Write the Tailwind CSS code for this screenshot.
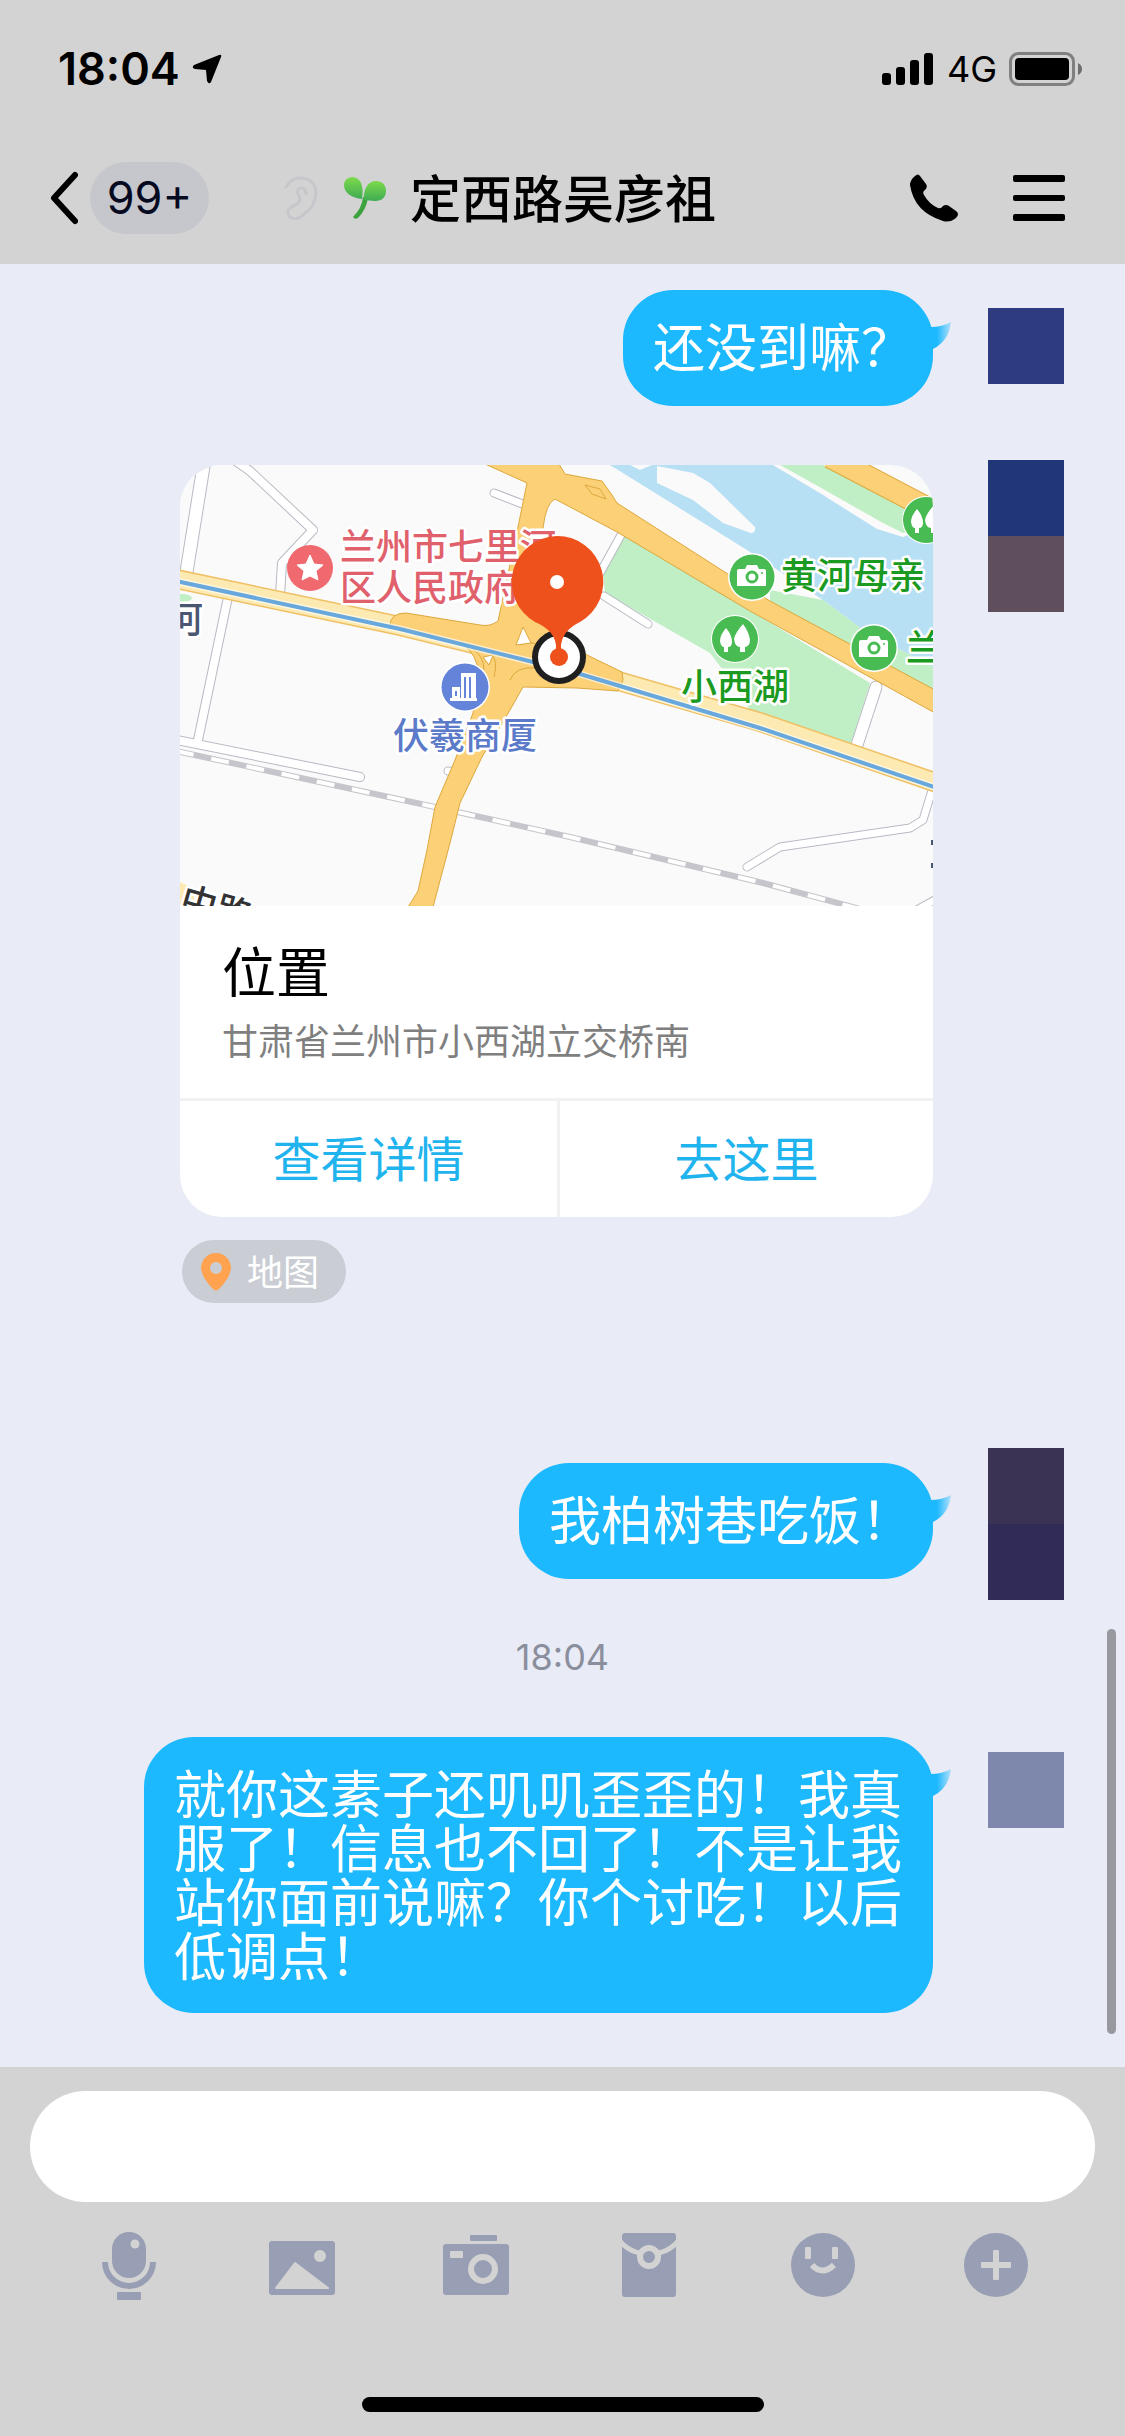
<!DOCTYPE html>
<html lang="zh-CN">
<head>
    <meta charset="UTF-8">
    <meta name="viewport" content="width=device-width, initial-scale=1.0">
    <title>定西路吴彦祖</title>
    <script src="https://cdn.jsdelivr.net/npm/@tailwindcss/browser@4"></script>
</head>
<body class="min-h-screen flex flex-col bg-[#e9ecf6] font-['Inter','Noto_Sans_CJK_SC',sans-serif]">

    <!-- 顶部 -->
    <header class="bg-[#d3d3d3] text-black">
        <!-- 状态栏 -->
        <div class="h-[138px] flex items-center pl-[58px] pr-[42px]">
            <span class="text-[45px] font-semibold">18:04</span>
            <svg class="ml-3 w-[30px] h-[30px]" viewBox="0 0 30 30"><path d="M27 1 L2 11 Q-1 14 3 15 L14 16 L15 27 Q17 31 19 28 L29 3 Q30 0 27 1Z"/></svg>
            <svg class="ml-auto w-[51px] h-[32px]" viewBox="0 0 51 32">
                <rect x="0" y="20" width="9" height="12" rx="3"/>
                <rect x="14" y="14" width="9" height="18" rx="3"/>
                <rect x="28" y="7" width="9" height="25" rx="3"/>
                <rect x="42" y="0" width="9" height="32" rx="3"/>
            </svg>
            <span class="ml-[14px] text-[36px]">4G</span>
            <svg class="ml-3 w-[74px] h-[34px]" viewBox="0 0 74 34">
                <rect x="1.5" y="1.5" width="63" height="31" rx="8" fill="none" stroke="#808080" stroke-width="3"/>
                <rect x="6" y="6" width="54" height="22" rx="4"/>
                <path d="M69 11 Q73 13 73 17 Q73 21 69 23Z" fill="#6e6e6e"/>
            </svg>
        </div>
        <!-- 导航栏 -->
        <nav class="h-[126px] pb-[6px] flex items-center pl-[50px] pr-[60px]">
            <button type="button" class="flex items-center gap-3" aria-label="返回">
                <svg class="w-[28px] h-[54px]" viewBox="0 0 28 54"><path d="M25 4 L4 27 L25 50" fill="none" stroke="#000" stroke-width="6" stroke-linecap="round" stroke-linejoin="round"/></svg>
                <span class="w-[119px] h-[72px] rounded-full bg-[#c6c7cc] text-[#050a20] text-[45px] flex items-center justify-center">99+</span>
            </button>
            <svg class="ml-[75px] w-[34px] h-[44px]" viewBox="0 0 34 44" fill="none" stroke="#c6c7ca" stroke-width="3" stroke-linecap="round">
                <path d="M2 11 Q7 2 17 2 Q32 3 32 18 Q30 32 21 37 Q17 42 11 43 Q3 42 4 34 Q8 30 13 28 Q18 25 15 20 Q11 13 17 12 Q22 12 22 18"/>
            </svg>
            <svg class="ml-[26px] w-[44px] h-[42px]" viewBox="0 0 44 42">
                <defs>
                    <linearGradient id="leaf" x1="0" y1="0" x2="0" y2="1">
                        <stop offset="0" stop-color="#7ddb4c"/>
                        <stop offset="1" stop-color="#3fab52"/>
                    </linearGradient>
                </defs>
                <path d="M19 20 L24 21 Q22 33 14 41 Q11 43 9 40 Q18 31 19 20Z" fill="#3ba23d"/>
                <path d="M18 22 C8 21 0 16 0 8 C0 3 4 0 9 0 C17 1 20 9 18 22Z" fill="url(#leaf)"/>
                <path d="M20 23 C19 12 24 4 32 4 C38 4 42 8 42 14 C42 20 38 24 31 24Z" fill="url(#leaf)"/>
            </svg>
            <h1 class="ml-[22px] pt-1 text-[51px] font-medium leading-[72px]">定西路吴彦祖</h1>
            <button type="button" class="ml-auto" aria-label="语音通话">
                <svg class="w-[48px] h-[48px]" viewBox="0 0 48 48"><path d="M5 2 Q8 -1 10 2 L16 10 Q18 13 15 16 Q12 18 14 21 Q19 30 28 34 Q31 35 33 32 Q36 30 39 32 L46 37 Q50 40 46 44 Q40 49 33 47 Q4 38 0 11 Q0 6 5 2Z"/></svg>
            </button>
            <button type="button" class="ml-[55px]" aria-label="菜单">
                <svg class="w-[52px] h-[48px]" viewBox="0 0 52 48">
                    <rect x="0" y="1" width="52" height="7" rx="2"/>
                    <rect x="0" y="21" width="52" height="6" rx="2"/>
                    <rect x="0" y="40" width="52" height="7" rx="2"/>
                </svg>
            </button>
        </nav>
    </header>

    <!-- 聊天记录 -->
    <main class="relative flex-1 pt-[26px] pr-[61px] pb-[54px] pl-[61px]">
        <svg class="absolute w-0 h-0">
            <defs>
                <linearGradient id="tailFill" x1="0" x2="1">
                    <stop offset="0.3" stop-color="#1cb9ff"/>
                    <stop offset="1" stop-color="#b3def8"/>
                </linearGradient>
                <symbol id="tail" viewBox="0 0 20 27"><path d="M0 5 Q11 5 20 0 Q18 19 2 27 L0 27Z" fill="url(#tailFill)"/></symbol>
            </defs>
        </svg>

        <div class="flex justify-end items-start gap-[55px]">
            <div class="relative min-h-[116px] rounded-[50px] bg-[#1cb9ff] pl-[30px] pr-5 pt-8 pb-7 text-white text-[52px] leading-[54px]">
                <p>还没到嘛？</p>
                <svg class="absolute top-8 -right-[18px] w-5 h-[27px]"><use href="#tail"/></svg>
            </div>
            <div class="mt-[18px] w-[76px] h-[76px] bg-[#2f3b80]"></div>
        </div>

        <div class="mt-[54px] flex justify-end items-start gap-[55px]">
            <div class="mt-[5px] w-[753px]">
                <article class="rounded-[42px] overflow-hidden bg-white">
                    <!-- 地图 -->
                    <svg class="block w-full h-[441px] font-['Noto_Sans_CJK_SC',sans-serif] text-[36px] font-medium" viewBox="0 0 753 441" preserveAspectRatio="xMidYMid slice">
                        <defs>
                            <g id="camera">
                                <circle r="24" fill="#fff"/>
                                <circle r="22.5" fill="#48bb52"/>
                                <path d="M-13 -8 H-7 L-5 -12 H5 L7 -8 H12 Q14 -8 14 -6 V9 H-15 V-6 Q-15 -8 -13 -8Z" fill="#fff"/>
                                <circle r="5" fill="#fff" stroke="#48bb52" stroke-width="3"/>
                                <circle cx="10" cy="-4" r="1" fill="#48bb52"/>
                            </g>
                            <g id="trees">
                                <circle r="24" fill="#fff"/>
                                <circle r="23" fill="#48bb52"/>
                                <path d="M-9 -11 Q-15 -4 -15 2 Q-14 8 -11 8 V13 H-7 V8 Q-3 8 -3 3 Q-3 -4 -9 -11Z" fill="#fff"/>
                                <path d="M8 -15 Q0 -6 -1 0 Q0 8 5 8 V13 H10 V8 Q15 7 15 1 Q14 -7 8 -15Z" fill="#fff"/>
                            </g>
                        </defs>
                        <rect width="753" height="441" fill="#fbfafa"/>

                        <!-- 黄河与绿地 -->
                        <path d="M430 0 L567 85 L643 135 L683 165 L753 202 V0Z" fill="#b8e0f4"/>
                        <path d="M450 0 H472 L460 5Z M477 1 L513 8 L530 18 L575 62 Q576 68 571 68 L543 58 L513 35 L477 18Z" fill="#fbfafa"/>
                        <path d="M593 0 L643 30 L697 64 L723 72 L753 60 V0Z" fill="#fbfafa"/>
                        <path d="M600 0 L643 24 L703 58 L723 68 L753 60 V50 L643 0Z" fill="#c0eec5"/>
                        <path d="M590 125 L643 135 L683 165 L753 202 V232 L590 145Z" fill="#c0eec5"/>
                        <path d="M445 70 L423 108 L425 128 L530 188 L543 205 L570 245 L670 282 L690 218Z" fill="#c0eec5"/>
                        <ellipse cx="2" cy="133" rx="10" ry="4" fill="#c0eec5"/>

                        <!-- 小路 -->
                        <g fill="none" stroke-linecap="round" stroke-linejoin="round">
                            <g stroke="#b8bac4">
                                <path d="M25 -8 L6 110" stroke-width="14"/>
                                <path d="M50 -8 L70 6 L133 65 L102 98 L100 130" stroke-width="10"/>
                                <path d="M48 132 L18 275" stroke-width="10"/>
                                <path d="M-8 274 L180 312" stroke-width="10"/>
                                <path d="M314 28 L345 40 M268 306 L285 308" stroke-width="9"/>
                                <path d="M441 70 L420 108 M424 131 L468 159" stroke-width="9"/>
                                <path d="M696 222 L675 286" stroke-width="13"/>
                                <path d="M753 322 L743 355 L730 363 L600 382 L567 402" stroke-width="9"/>
                                <path d="M735 446 L760 432" stroke-width="9"/>
                            </g>
                            <g stroke="#fff">
                                <path d="M25 -8 L6 110" stroke-width="12"/>
                                <path d="M50 -8 L70 6 L133 65 L102 98 L100 130" stroke-width="8"/>
                                <path d="M48 132 L18 275" stroke-width="8"/>
                                <path d="M-8 274 L180 312" stroke-width="8"/>
                                <path d="M314 28 L345 40 M268 306 L285 308" stroke-width="7"/>
                                <path d="M441 70 L420 108 M424 131 L468 159" stroke-width="7"/>
                                <path d="M696 222 L675 286" stroke-width="11"/>
                                <path d="M753 322 L743 355 L730 363 L600 382 L567 402" stroke-width="7"/>
                                <path d="M735 446 L760 432" stroke-width="7"/>
                            </g>
                        </g>

                        <!-- 铁路 -->
                        <g fill="none">
                            <path d="M-4 286 L255 342 L390 372 L583 418 L680 444" stroke="#c5c5cb" stroke-width="6"/>
                            <path d="M-4 286 L255 342 L390 372 L583 418 L680 444" stroke="#fff" stroke-width="4" stroke-dasharray="18 18"/>
                        </g>

                        <!-- 主干道 -->
                        <g fill="none">
                            <path d="M-4 114 L220 161 L400 205 L580 257 L757 318" stroke="#efc064" stroke-width="20"/>
                            <path d="M-4 114 L220 161 L400 205 L580 257 L757 318" stroke="#fdeab2" stroke-width="17"/>
                            <path d="M650 -8 L757 48" stroke="#dca83c" stroke-width="23"/>
                            <path d="M650 -8 L757 48" stroke="#fbd077" stroke-width="21"/>
                        </g>
                        <path d="M305 -1 L347 18 L338 62 L318 156 Q310 162 300 160 L226 148 Q210 148 210 161 L285 181 Q296 190 298 205 L293 248 L275 295 L255 342 L247 385 L238 426 L228 442 H253 L270 378 L280 338 L302 292 L330 245 L343 222 L397 223 L438 226 L443 215 L442 207 L407 190 L365 158 Q352 140 352 110 L363 63 Q366 38 375 34 L437 67 L570 146 L755 248 V225 L590 136 L437 38 L432 30 L422 16 L385 9 L379 -1Z" fill="#fbd077" stroke="#dca83c" stroke-width="1"/>
                        <path d="M405 20 L420 24 L426 34 L412 29Z M312 190 Q318 196 314 212 M330 215 Q336 201 355 203 M340 180 Q352 174 360 182 M290 182 Q304 190 304 205" fill="none" stroke="#dca83c" stroke-width="1"/>
                        <path d="M343 162 L336 180 L351 178Z M303 192 L313 190 L309 200Z" fill="#fff" stroke="#dca83c" stroke-width="1"/>
                        <path d="M-4 116 L220 164 L353 197 L400 209 L580 263 L757 323" fill="none" stroke="#fff" stroke-width="7" stroke-opacity="0.6"/>
                        <path d="M-4 116 L220 164 L353 197 L400 209 L580 263 L757 323" fill="none" stroke="#68a8dc" stroke-width="4"/>
                        <path d="M-4 415 L14 424 V446 H-4Z" fill="#fdeab2"/>

                        <!-- 地名 -->
                        <g stroke="#fff" stroke-width="5" stroke-linejoin="round" paint-order="stroke">
                            <text x="160" y="95" fill="#e0616c">兰州市七里河</text>
                            <text x="160" y="136" fill="#e0616c">区人民政府</text>
                            <text x="-13" y="168" fill="#4a5672">河</text>
                            <text x="213" y="284" fill="#5b7ac9">伏羲商厦</text>
                            <text x="601" y="124" fill="#1a9a20">黄河母亲</text>
                            <text x="501" y="235" fill="#1a9a20">小西湖</text>
                            <text x="726" y="196" fill="#1a9a20">兰</text>
                            <text x="-2" y="446" fill="#333" transform="rotate(16 0 446)">中路</text>
                        </g>
                        <path d="M751 375 h2 v5 h-2z M751 398 h2 v5 h-2z" fill="#4a5672"/>

                        <!-- 标记 -->
                        <circle cx="130" cy="103" r="23" fill="#f0696f"/>
                        <path d="M130 90 L134 99 L143 100 L136 106 L138 115 L130 111 L122 115 L124 106 L117 100 L126 99Z" fill="#fff" stroke="#fff" stroke-linejoin="round"/>
                        <circle cx="285" cy="222" r="25" fill="#fff"/>
                        <circle cx="285" cy="222" r="23.5" fill="#6484da"/>
                        <path d="M270 233 H297 V236 H270Z M272 222 H280 V234 H272Z M281 208 H296 V234 H281Z" fill="#fff"/>
                        <path d="M285 212 V233 M290 212 V233 M276 226 V231" stroke="#6484da" stroke-width="2"/>
                        <use href="#camera" x="572" y="112"/>
                        <use href="#camera" x="694" y="183"/>
                        <use href="#trees" x="555" y="174"/>
                        <use href="#trees" x="746" y="55"/>

                        <circle cx="379" cy="192" r="24" fill="#fff" stroke="#1f1f1f" stroke-width="6"/>
                        <path d="M377 71 A46 46 0 0 1 400 157 Q383 165 381 180 V190 H376 V180 Q374 165 355 157 A46 46 0 0 1 377 71Z" fill="#ee511c"/>
                        <circle cx="379" cy="192" r="9" fill="#ee511c"/>
                        <circle cx="377" cy="117" r="7" fill="#fff"/>
                    </svg>
                    <div class="h-[192px] pt-[38px] pl-[42px]">
                        <h2 class="text-[54px] leading-[60px] text-black">位置</h2>
                        <p class="mt-4 text-[36px] leading-[44px] text-[#7f7f7f]">甘肃省兰州市小西湖立交桥南</p>
                    </div>
                    <div class="grid grid-cols-[380fr_373fr] border-t-[3px] border-[#f1f1f2] text-[48px] text-[#1fb4ee]">
                        <button type="button" class="h-[116px] pt-[2px] border-r-[3px] border-[#f1f1f2]">查看详情</button>
                        <button type="button" class="h-[116px] pt-[2px]">去这里</button>
                    </div>
                </article>
                <a href="#" class="mt-[23px] ml-[2px] w-[164px] h-[63px] rounded-full bg-[#cacdd4] flex items-center pl-[19px] gap-4 text-[36px] text-white">
                    <svg class="w-[30px] h-[38px]" viewBox="0 0 30 38"><path d="M15 0 A15 15 0 0 1 30 15 Q29 25 18 36 Q15 39 12 36 Q1 25 0 15 A15 15 0 0 1 15 0Z M15 9 A6 6 0 0 0 15 21 A6 6 0 0 0 15 9Z" fill="#ffa351"/></svg>
                    <span class="pt-[2px]">地图</span>
                </a>
            </div>
            <div class="w-[76px]">
                <div class="h-[76px] bg-[#213579]"></div>
                <div class="h-[76px] bg-[#5f4f5c]"></div>
            </div>
        </div>

        <div class="mt-[145px] flex justify-end items-start gap-[55px]">
            <div class="relative mt-[15px] min-h-[116px] rounded-[50px] bg-[#1cb9ff] pl-[30px] pr-5 pt-8 pb-7 text-white text-[52px] leading-[54px]">
                <p>我柏树巷吃饭！</p>
                <svg class="absolute top-8 -right-[18px] w-5 h-[27px]"><use href="#tail"/></svg>
            </div>
            <div class="w-[76px]">
                <div class="h-[76px] bg-[#3a3353]"></div>
                <div class="h-[76px] bg-[#302b57]"></div>
            </div>
        </div>

        <time class="block mt-[35px] text-center text-[36px] leading-[44px] text-[#8b8f9d]">18:04</time>

        <div class="mt-[58px] flex justify-end items-start gap-[55px]">
            <div class="relative w-[789px] rounded-[50px] bg-[#1cb9ff] px-[30px] pt-8 pb-7 text-white text-[52px] leading-[54px]">
                <p>就你这素子还叽叽歪歪的！我真<br>服了！信息也不回了！不是让我<br>站你面前说嘛？你个讨吃！以后<br>低调点！</p>
                <svg class="absolute top-8 -right-[18px] w-5 h-[27px]"><use href="#tail"/></svg>
            </div>
            <div class="mt-[15px] w-[76px] h-[76px] bg-[#7e88ac]"></div>
        </div>

        <!-- 滚动条 -->
        <div class="absolute right-[9px] bottom-[33px] w-[9px] h-[405px] rounded-full bg-[#98999f]"></div>
    </main>

    <!-- 输入区 -->
    <footer class="bg-[#d3d3d3] pt-6 pb-6">
        <div class="px-[30px]">
            <input type="text" aria-label="输入消息" class="block w-full h-[111px] rounded-full bg-white px-12 text-[48px] outline-none">
        </div>
        <div class="mt-[27px] px-[42px] grid grid-cols-6 justify-items-center text-[#989eb4]">
            <button type="button" aria-label="语音">
                <svg class="w-[72px] h-[72px]" viewBox="0 0 72 72" fill="currentColor">
                    <rect x="19" y="3" width="34" height="46" rx="17"/>
                    <circle cx="42" cy="15" r="4.5" fill="#d3d3d3"/>
                    <path d="M12 33 A24 24 0 0 0 60 33" fill="none" stroke="currentColor" stroke-width="6"/>
                    <rect x="24" y="63" width="24" height="8" rx="1"/>
                </svg>
            </button>
            <button type="button" aria-label="图片">
                <svg class="w-[72px] h-[72px]" viewBox="0 0 72 72" fill="currentColor">
                    <rect x="3" y="12" width="66" height="54" rx="3"/>
                    <circle cx="54" cy="27" r="6" fill="#d3d3d3"/>
                    <path d="M29 34 L10 59 H62Z" fill="#d3d3d3" stroke="#d3d3d3" stroke-width="2" stroke-linejoin="round"/>
                </svg>
            </button>
            <button type="button" aria-label="拍照">
                <svg class="w-[72px] h-[72px]" viewBox="0 0 72 72" fill="currentColor">
                    <rect x="30" y="6" width="27" height="6" rx="1"/>
                    <rect x="3" y="15" width="66" height="51" rx="3"/>
                    <rect x="10" y="22" width="13" height="7" rx="1" fill="#d3d3d3"/>
                    <circle cx="43" cy="40" r="12" fill="none" stroke="#d3d3d3" stroke-width="6"/>
                </svg>
            </button>
            <button type="button" aria-label="红包">
                <svg class="w-[72px] h-[72px]" viewBox="0 0 72 72" fill="currentColor">
                    <rect x="9" y="4" width="54" height="64" rx="3"/>
                    <path d="M6 11 Q17 25 36 25 Q55 25 66 11" fill="none" stroke="#d3d3d3" stroke-width="5"/>
                    <circle cx="36" cy="28" r="9" fill="currentColor" stroke="#d3d3d3" stroke-width="6"/>
                </svg>
            </button>
            <button type="button" aria-label="表情">
                <svg class="w-[72px] h-[72px]" viewBox="0 0 72 72" fill="currentColor">
                    <circle cx="36" cy="36" r="32"/>
                    <rect x="18" y="18" width="6" height="12" rx="1" fill="#d3d3d3"/>
                    <rect x="45" y="18" width="6" height="12" rx="1" fill="#d3d3d3"/>
                    <path d="M25 36 Q35 47 47 36" fill="none" stroke="#d3d3d3" stroke-width="6"/>
                </svg>
            </button>
            <button type="button" aria-label="更多">
                <svg class="w-[72px] h-[72px]" viewBox="0 0 72 72" fill="currentColor">
                    <circle cx="36" cy="36" r="32"/>
                    <rect x="21" y="33" width="30" height="6" rx="1" fill="#d3d3d3"/>
                    <rect x="33" y="21" width="6" height="30" rx="1" fill="#d3d3d3"/>
                </svg>
            </button>
        </div>
        <div class="mt-[96px] mx-auto w-[402px] h-[15px] rounded-full bg-black"></div>
    </footer>
</body>
</html>
